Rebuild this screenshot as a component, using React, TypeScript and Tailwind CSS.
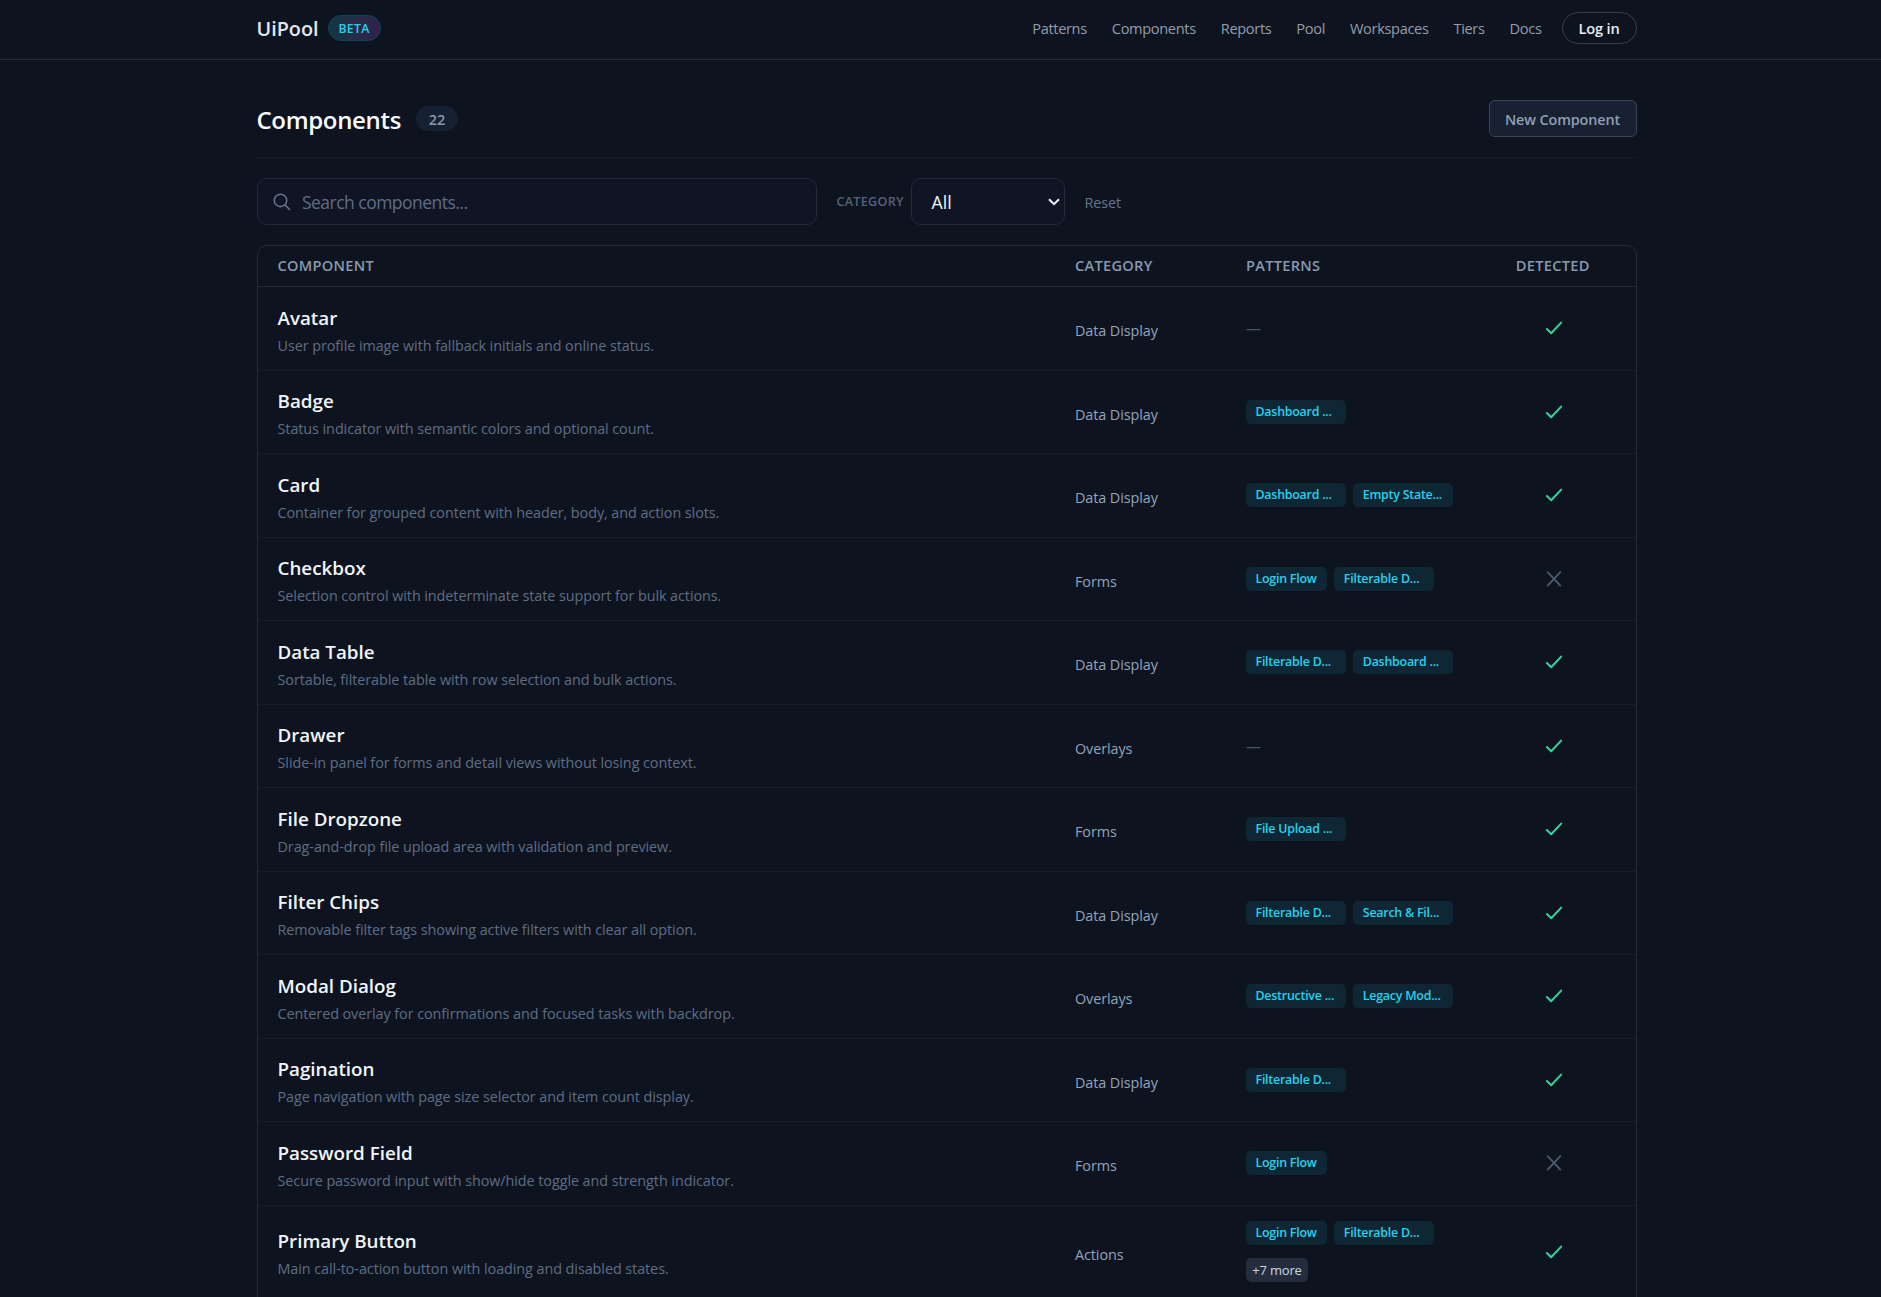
import clsx from "clsx";

type ComponentRow = {
  name: string;
  description: string;
  category: string;
  patterns: string[];
  more?: number;
  detected: boolean;
};

const navLinks = ["Patterns", "Components", "Reports", "Pool", "Workspaces", "Tiers", "Docs"];

const rows: ComponentRow[] = [
  { name: "Avatar", description: "User profile image with fallback initials and online status.", category: "Data Display", patterns: [], detected: true },
  { name: "Badge", description: "Status indicator with semantic colors and optional count.", category: "Data Display", patterns: ["Dashboard ..."], detected: true },
  { name: "Card", description: "Container for grouped content with header, body, and action slots.", category: "Data Display", patterns: ["Dashboard ...", "Empty State..."], detected: true },
  { name: "Checkbox", description: "Selection control with indeterminate state support for bulk actions.", category: "Forms", patterns: ["Login Flow", "Filterable D..."], detected: false },
  { name: "Data Table", description: "Sortable, filterable table with row selection and bulk actions.", category: "Data Display", patterns: ["Filterable D...", "Dashboard ..."], detected: true },
  { name: "Drawer", description: "Slide-in panel for forms and detail views without losing context.", category: "Overlays", patterns: [], detected: true },
  { name: "File Dropzone", description: "Drag-and-drop file upload area with validation and preview.", category: "Forms", patterns: ["File Upload ..."], detected: true },
  { name: "Filter Chips", description: "Removable filter tags showing active filters with clear all option.", category: "Data Display", patterns: ["Filterable D...", "Search & Fil..."], detected: true },
  { name: "Modal Dialog", description: "Centered overlay for confirmations and focused tasks with backdrop.", category: "Overlays", patterns: ["Destructive ...", "Legacy Mod..."], detected: true },
  { name: "Pagination", description: "Page navigation with page size selector and item count display.", category: "Data Display", patterns: ["Filterable D..."], detected: true },
  { name: "Password Field", description: "Secure password input with show/hide toggle and strength indicator.", category: "Forms", patterns: ["Login Flow"], detected: false },
  { name: "Primary Button", description: "Main call-to-action button with loading and disabled states.", category: "Actions", patterns: ["Login Flow", "Filterable D..."], more: 7, detected: true },
];

function Header() {
  return (
    <header className="h-[60px] border-b border-[#232a37]">
      <div className="ml-[256.5px] flex h-[56px] w-[1380px] items-center justify-between">
        <div className="flex items-center gap-[10px]">
          <span className="w-[61px] pt-[2px] text-[19.8px] font-semibold text-[#e2e8f0]">UiPool</span>
          <span className="flex h-[26px] w-[53px] items-center justify-center rounded-full border border-[#0e4555] bg-linear-to-r from-[#0f3644] to-[#32204c] pt-[2px] text-[12.3px] font-semibold tracking-[0.02em] text-[#22d3ee]">
            BETA
          </span>
        </div>
        <nav className="flex items-center">
          {navLinks.map((link) => (
            <a key={link} href="#" className="mr-[25px] pt-px text-[14.6px] tracking-[-0.024em] text-[#949dab] last-of-type:mr-5">
              {link}
            </a>
          ))}
          <button className="h-8 w-[75px] rounded-full border border-[#373e4b] pt-px text-[14.6px] font-semibold tracking-[-0.01em] text-[#e8edf4]">
            Log in
          </button>
        </nav>
      </div>
    </header>
  );
}

function Filters() {
  return (
    <div className="mt-5 flex h-[47px] items-center">
      <div className="flex h-full w-[560px] items-center rounded-[10px] border border-[#232a38] bg-[#0f1525] pl-[15px]">
        <svg width="18" height="18" viewBox="0 0 18 18" fill="none" stroke="#64748b" strokeWidth="1.6" strokeLinecap="round">
          <circle cx="7.5" cy="7.4" r="6.2" />
          <path d="M12 11.9 16.6 16.5" />
        </svg>
        <span className="ml-[11.5px] pt-[2px] text-[17.5px] tracking-[-0.03em] text-[#5f6d83]">Search components...</span>
      </div>
      <span className="ml-5 w-[67px] pt-px text-[12.6px] font-semibold tracking-[0.022em] whitespace-nowrap text-[#56637a]">CATEGORY</span>
      <div className="ml-[7px] flex h-full w-[154px] items-center justify-between rounded-[10px] border border-[#232a38] bg-[#0f1525] pr-1 pl-5">
        <span className="pt-[2px] text-[17.8px] text-[#f1f5f9]">All</span>
        <svg width="12" height="8" viewBox="0 0 12 8" fill="none" stroke="#f1f5f9" strokeWidth="2">
          <path d="M1 1.2 6 6.2 11 1.2" />
        </svg>
      </div>
      <button className="ml-5 pt-[2px] text-[14.4px] tracking-[-0.005em] text-[#64748b]">Reset</button>
    </div>
  );
}

function Chip({ label }: { label: string }) {
  return (
    <span
      className={clsx(
        "flex h-6 items-center rounded-[5px] bg-[#0f2634] pt-px pl-[9.5px] text-[12.4px] font-semibold tracking-[-0.018em] whitespace-nowrap text-[#22d3ee]",
        label.endsWith("...") ? "w-[100px]" : "w-[81px]",
      )}
    >
      {label}
    </span>
  );
}

function StatusIcon({ detected }: { detected: boolean }) {
  if (detected) {
    return (
      <svg width="18" height="14" viewBox="0 0 18 14" fill="none" stroke="#34d399" strokeWidth="2" strokeLinecap="round" strokeLinejoin="round">
        <path d="M1.9 8 6.2 12.2 16.2 1.6" />
      </svg>
    );
  }
  return (
    <svg width="16" height="16" viewBox="0 0 16 16" fill="none" stroke="#4b5a70" strokeWidth="1.8" strokeLinecap="round">
      <path d="M1.7 1.2 14.3 14.6M14.3 1.2 1.7 14.6" />
    </svg>
  );
}

function Row({ row }: { row: ComponentRow }) {
  return (
    <div
      className={clsx(
        "grid grid-cols-[797.5px_171px_244px_125.5px] items-center border-b border-[#161d2a] px-5",
        row.more ? "h-[93px]" : "h-[83.5px]",
      )}
    >
      <div className="pt-[8px]">
        <div className="text-[18.8px] leading-[27px] font-semibold text-[#f1f5f9]">{row.name}</div>
        <div className="text-[14.4px] leading-[28px] tracking-[-0.005em] text-[#5f6d83]">{row.description}</div>
      </div>
      <div className="pt-[6px] text-[14.4px] tracking-[-0.006em] text-[#94a3b8]">{row.category}</div>
      <div className="flex w-[224px] flex-wrap gap-x-[7.3px] gap-y-[13px]">
        {row.patterns.length === 0 && <span className="text-[15px] text-[#475569]">—</span>}
        {row.patterns.map((pattern) => (
          <Chip key={pattern} label={pattern} />
        ))}
        {row.more && (
          <span className="flex h-6 w-[62px] items-center justify-center rounded-[5px] bg-[#242d3d] pt-px text-[13px] tracking-[-0.015em] text-[#cbd5e1]">
            +{row.more} more
          </span>
        )}
      </div>
      <div className="flex justify-center pl-[2px]">
        <StatusIcon detected={row.detected} />
      </div>
    </div>
  );
}

export default function App() {
  return (
    <div className="h-[1297px] overflow-hidden bg-[#0d1420] font-['Open_Sans','Noto_Sans',sans-serif]">
      <Header />
      <main className="ml-[256.5px] w-[1380px]">
        <div className="flex h-[98px] items-center justify-between border-b border-[#161d2a] pt-[20px]">
          <div className="flex items-center gap-[15px]">
            <h1 className="pt-[2px] text-[24px] font-semibold tracking-[-0.014em] text-[#f8fafc]">Components</h1>
            <span className="flex h-[25px] w-[42px] items-center justify-center rounded-full bg-[#152033] pt-[2px] text-[14.4px] font-semibold text-[#8a99ae]">
              22
            </span>
          </div>
          <button className="h-[37px] w-[148px] rounded-md border border-[#3b4554] bg-[#182131] pt-[2px] text-[14.4px] font-semibold tracking-[-0.008em] text-[#8f9eb3]">
            New Component
          </button>
        </div>
        <Filters />
        <section className="mt-5 h-[1100px] rounded-t-[10px] border border-[#232a37]">
          <div className="grid h-[41px] grid-cols-[797.5px_171px_244px_125.5px] items-center border-b border-[#232a37] px-5 text-[14.6px] font-semibold tracking-[0.02em] text-[#8a99ae]">
            <span>COMPONENT</span>
            <span>CATEGORY</span>
            <span>PATTERNS</span>
            <span className="text-center">DETECTED</span>
          </div>
          {rows.map((row) => (
            <Row key={row.name} row={row} />
          ))}
        </section>
      </main>
    </div>
  );
}
